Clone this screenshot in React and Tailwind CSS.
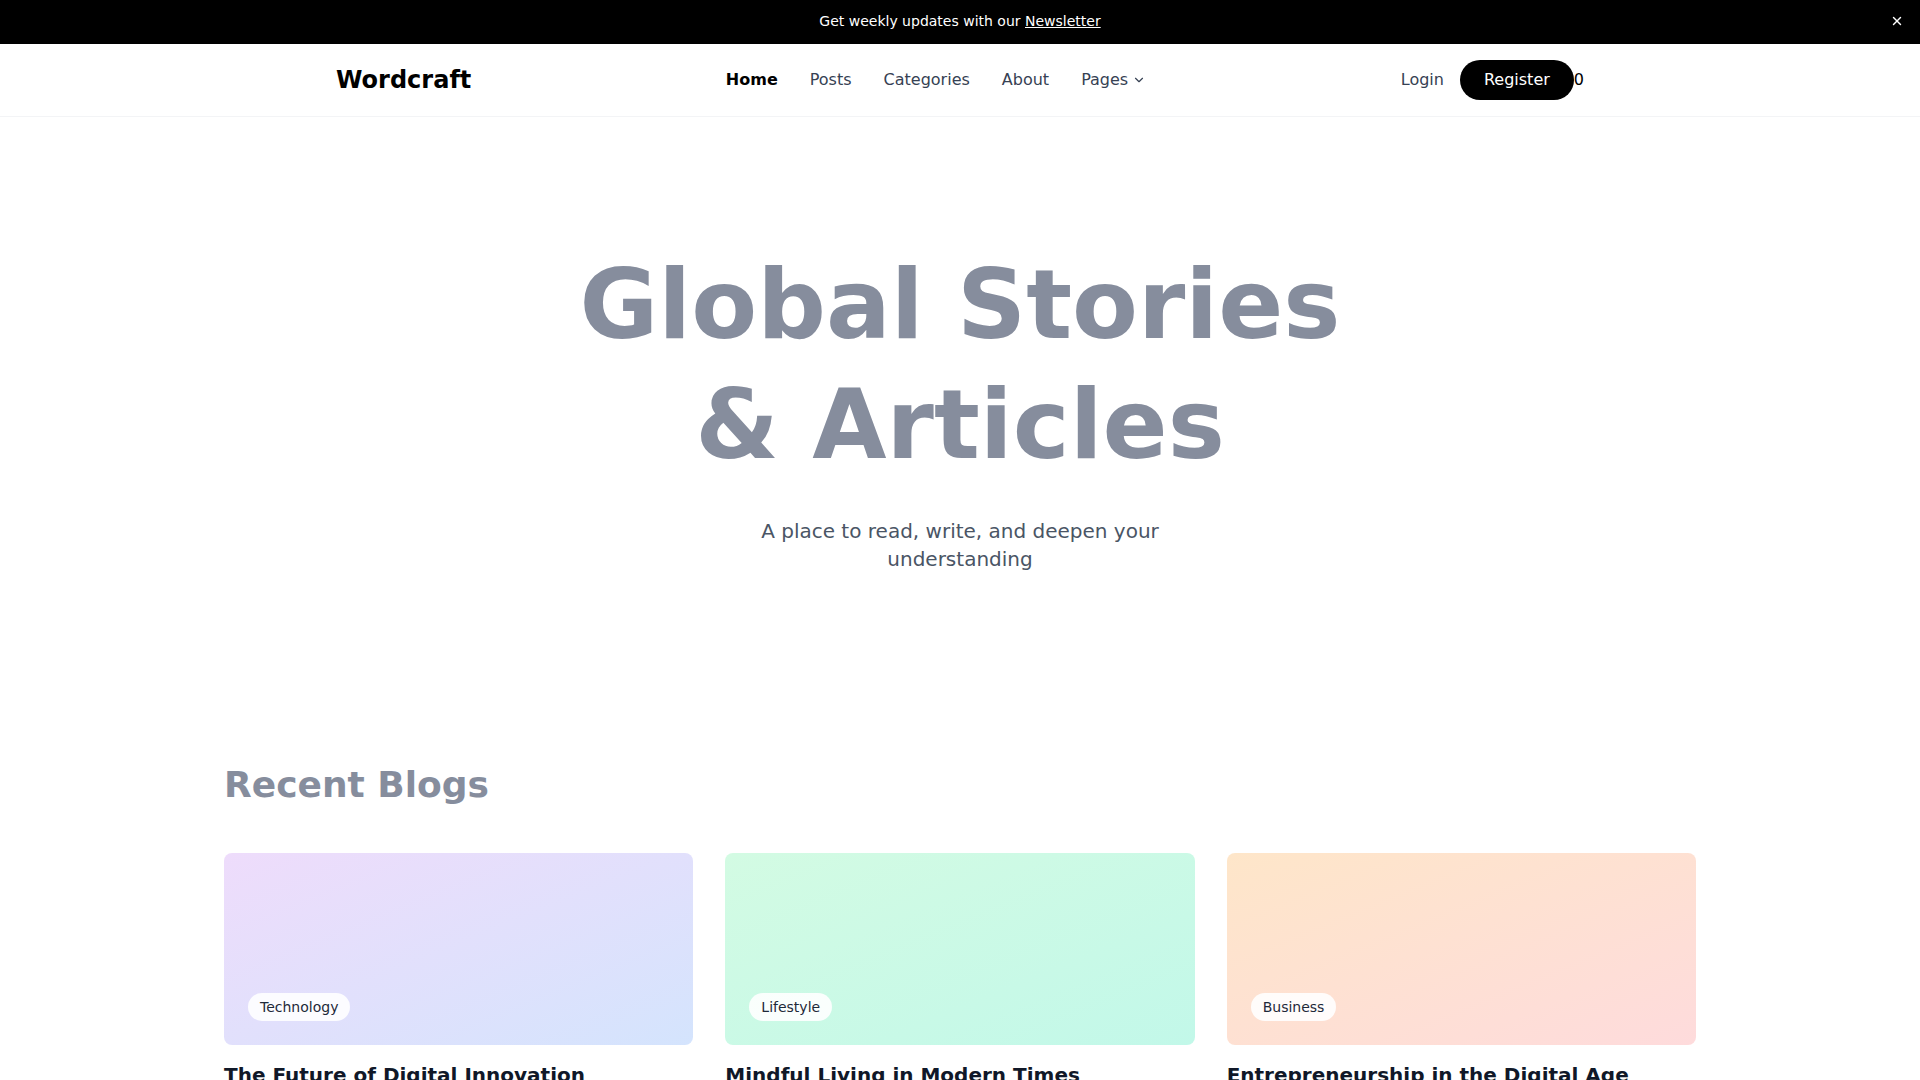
import React, { useState } from "react";
import { X, ChevronDown } from "lucide-react";

const posts = [
  {
    title: "The Future of Digital Innovation",
    category: "Technology",
    gradient: "bg-gradient-to-br from-[#eedcfb] to-[#d4e4fd]",
    excerpt: "Exploring how emerging technologies are reshaping the way we live and work.",
  },
  {
    title: "Mindful Living in Modern Times",
    category: "Lifestyle",
    gradient: "bg-gradient-to-br from-[#d3fbe3] to-[#c2f8e9]",
    excerpt: "Simple practices for finding balance and calm in a busy, connected world.",
  },
  {
    title: "Entrepreneurship in the Digital Age",
    category: "Business",
    gradient: "bg-gradient-to-br from-[#fee6c9] to-[#fedbdc]",
    excerpt: "Lessons from founders building companies on the open internet.",
  },
];

const Banner = ({ onClose }) => (
  <div className="relative flex h-11 items-center justify-center bg-black pb-0.5 text-sm text-white">
    <p>
      Get weekly updates with our{" "}
      <a href="#" className="underline">
        Newsletter
      </a>
    </p>
    <button onClick={onClose} className="absolute right-4 text-white">
      <X size={14} strokeWidth={2.5} />
    </button>
  </div>
);

const Navbar = () => {
  const cartCount = 0;
  return (
    <header className="border-b border-gray-100 bg-white">
      <nav className="mx-auto flex max-w-7xl items-center justify-between px-4 py-4">
        <a href="#" className="text-2xl font-bold text-black">
          Wordcraft
        </a>
        <div className="flex items-center gap-8 text-base text-gray-700">
          <a href="#" className="font-bold text-black">
            Home
          </a>
          <a href="#">Posts</a>
          <a href="#">Categories</a>
          <a href="#">About</a>
          <button className="flex items-center gap-1">
            Pages <ChevronDown size={14} />
          </button>
        </div>
        <div className="flex items-center gap-4 text-base">
          <a href="#" className="text-gray-700">
            Login
          </a>
          <div className="flex items-center text-black">
            <button className="h-10 rounded-full bg-black px-6 text-white">Register</button>
            {cartCount}
          </div>
        </div>
      </nav>
    </header>
  );
};

const Hero = () => (
  <section className="px-4 pt-32 pb-32 text-center">
    <h1 className="mx-auto mb-8 max-w-3xl text-8xl leading-tight font-bold text-[#868d9d]">
      Global Stories & Articles
    </h1>
    <p className="mx-auto max-w-md text-xl text-gray-600">
      A place to read, write, and deepen your understanding
    </p>
  </section>
);

const BlogCard = ({ post }) => (
  <article>
    <div className={`relative mb-4 h-48 rounded-lg ${post.gradient}`}>
      <span className="absolute bottom-6 left-6 rounded-full bg-white/90 px-3 py-1 text-sm text-gray-800">
        {post.category}
      </span>
    </div>
    <h3 className="mb-2 text-xl font-bold text-gray-900">{post.title}</h3>
    <p className="text-gray-600">{post.excerpt}</p>
  </article>
);

const App = () => {
  const [showBanner, setShowBanner] = useState(true);

  return (
    <div className="min-h-screen bg-white font-['DejaVu_Sans',sans-serif]">
      {showBanner && <Banner onClose={() => setShowBanner(false)} />}
      <Navbar />
      <Hero />
      <section className="mx-auto max-w-[1536px] px-8 pt-16 pb-16">
        <h2 className="mb-12 text-4xl font-bold text-[#868d9d]">Recent Blogs</h2>
        <div className="grid grid-cols-3 gap-8">
          {posts.map((post) => (
            <BlogCard key={post.title} post={post} />
          ))}
        </div>
      </section>
    </div>
  );
};

export default App;
